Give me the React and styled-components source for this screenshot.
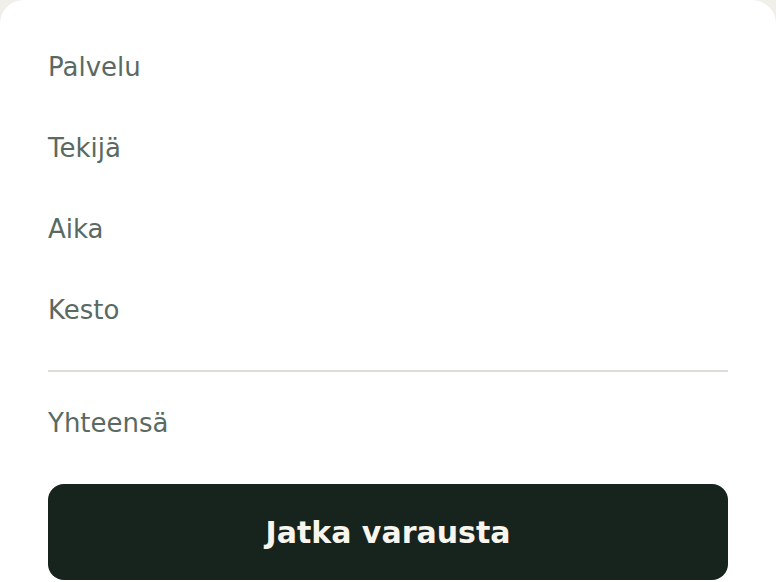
import React from "react";
import styled, { createGlobalStyle } from "styled-components";

const GlobalStyle = createGlobalStyle`
  html, body {
    margin: 0;
    padding: 0;
    background: #f1efe9;
  }
  body {
    font-family: "DejaVu Sans", "Liberation Sans", sans-serif;
  }
`;

const Card = styled.section`
  background: #ffffff;
  border-radius: 24px 24px 0 0;
  padding: 27px 48px 2px;
  min-height: 580px;
  box-sizing: border-box;
`;

const Row = styled.div`
  display: flex;
  justify-content: space-between;
  align-items: center;
  padding: ${(p) => (p.$total ? "20px 0" : "20.4px 0")};
  font-size: 26px;
  line-height: 40px;
  color: #5a6a62;
`;

const Value = styled.span`
  color: #17231d;
`;

const Divider = styled.hr`
  border: none;
  border-top: 2px solid #dedcd8;
  margin: 20px 0 11px;
`;

const ContinueButton = styled.button`
  display: block;
  width: 100%;
  height: 96px;
  margin-top: 21px;
  border: none;
  border-radius: 16px;
  background: #17231d;
  color: #f8f5ee;
  font-family: inherit;
  font-size: 30px;
  font-weight: 700;
  cursor: pointer;
`;

const summary = [
  { label: "Palvelu", value: "" },
  { label: "Tekijä", value: "" },
  { label: "Aika", value: "" },
  { label: "Kesto", value: "" },
];

const App = () => {
  return (
    <>
      <GlobalStyle />
      <Card>
        {summary.map((item) => (
          <Row key={item.label}>
            <span>{item.label}</span>
            <Value>{item.value}</Value>
          </Row>
        ))}
        <Divider />
        <Row $total>
          <span>Yhteensä</span>
          <Value></Value>
        </Row>
        <ContinueButton type="button">Jatka varausta</ContinueButton>
      </Card>
    </>
  );
};

export default App;
